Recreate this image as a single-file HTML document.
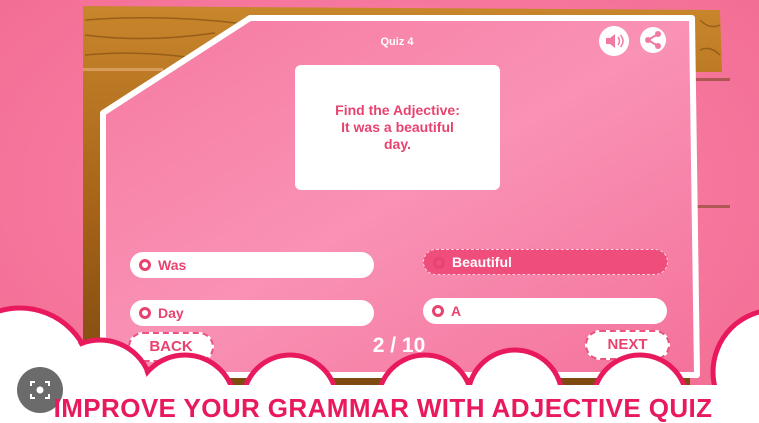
<!DOCTYPE html>
<html><head><meta charset="utf-8"><style>
html,body{margin:0;padding:0;width:759px;height:423px;overflow:hidden}
body{position:relative;background:radial-gradient(ellipse at 50% 45%,#fa9bbb 0%,#f6789e 55%,#f26b92 100%);font-family:"Liberation Sans",sans-serif}
svg{overflow:hidden}
.abs{position:absolute}
.opt{position:absolute;height:26px;border-radius:14px;background:#fff;color:#e8436f;font-weight:bold;font-size:14px;line-height:26px;box-sizing:border-box;padding-left:28px}
.opt:before{content:"";position:absolute;left:9px;top:7px;width:6px;height:6px;border:3px solid #e8436f;border-radius:50%}
.btn{position:absolute;border:2px dashed #e9557f;border-radius:16px;background:#fff;color:#e8436f;font-weight:bold;font-size:15px;text-align:center;box-sizing:border-box}
</style></head><body>
<svg class="abs" style="left:0;top:0" width="759" height="423">
<defs><linearGradient id="w" x1="0" y1="0" x2="0" y2="1"><stop offset="0" stop-color="#c8862c"/><stop offset=".5" stop-color="#a86418"/><stop offset="1" stop-color="#7a4810"/></linearGradient>
<linearGradient id="p" x1="0" y1="0" x2="1" y2="1"><stop offset="0" stop-color="#f67aa0"/><stop offset=".5" stop-color="#f992b5"/><stop offset="1" stop-color="#f4729b"/></linearGradient></defs>
<polygon points="83,6 720,10 722,72 690,72 690,400 83,400" fill="url(#w)"/>
<g stroke="#7a4810" stroke-width="1.5" fill="none" opacity=".6">
<path d="M85 20q80 -6 160 4M85 35q60 8 130 -2M85 55q50 -5 110 3M700 20q10 10 20 5M700 50q10 -5 20 5"/>
</g>
<rect x="83" y="68" width="80" height="3" fill="#e8b080" opacity=".6"/>
<rect x="690" y="78" width="40" height="3" fill="#6a3a0a" opacity=".5"/>
<rect x="690" y="205" width="40" height="3" fill="#6a3a0a" opacity=".5"/>
<polygon points="250,18 692,18 697,375 103,375 103,113" fill="url(#p)" stroke="#fff" stroke-width="6" stroke-linejoin="round"/>
</svg>
<div class="abs" style="left:370px;top:36px;width:54px;text-align:center;color:#fff;font-weight:bold;font-size:11px">Quiz 4</div>
<svg class="abs" style="left:598px;top:26px" width="70" height="32">
<circle cx="16" cy="15" r="15" fill="#fff"/>
<path d="M8 12h4l5-4v14l-5-4H8z" fill="#f07aa0"/>
<path d="M20 11q3 4 0 8M22.5 9q5 6 0 12" stroke="#f07aa0" stroke-width="1.5" fill="none"/>
<circle cx="55" cy="14" r="13" fill="#fff"/>
<circle cx="60" cy="8" r="3" fill="#f07aa0"/><circle cx="50" cy="14" r="3" fill="#f07aa0"/><circle cx="60" cy="20" r="3" fill="#f07aa0"/>
<path d="M60 8L50 14L60 20" stroke="#f07aa0" stroke-width="2" fill="none"/>
</svg>
<div class="abs" style="left:295px;top:65px;width:205px;height:125px;background:#fff;border-radius:6px;color:#e8436f;font-weight:bold;font-size:14px;line-height:17px;text-align:center;box-sizing:border-box;padding-top:37px">Find the Adjective:<br>It was a beautiful<br>day.</div>
<div class="opt" style="left:130px;top:252px;width:244px">Was</div>
<div class="opt" style="left:130px;top:300px;width:244px">Day</div>
<div class="opt" style="left:423px;top:298px;width:244px">A</div>
<div class="opt" style="left:423px;top:249px;width:245px;background:#ef4d7c;color:#fff;border:1px dashed #fbd0dc;line-height:24px">Beautiful</div>
<div class="btn" style="left:128px;top:332px;width:86px;height:30px;line-height:26px">BACK</div>
<div class="btn" style="left:585px;top:330px;width:85px;height:30px;line-height:26px">NEXT</div>
<div class="abs" style="left:356px;top:334px;width:86px;text-align:center;color:#fff;font-weight:bold;font-size:21px">2 / 10</div>
<svg class="abs" style="left:0;top:0" width="759" height="423">
<g fill="#fff" stroke="#e8195c" stroke-width="5">
<circle cx="20" cy="380" r="72"/><circle cx="100" cy="392" r="52"/><circle cx="185" cy="405" r="50"/><circle cx="290" cy="402" r="47"/><circle cx="425" cy="402" r="47"/><circle cx="515" cy="397" r="47"/><circle cx="640" cy="402" r="47"/><circle cx="775" cy="372" r="62"/>
</g>
<g fill="#fff">
<circle cx="20" cy="380" r="69"/><circle cx="100" cy="392" r="49"/><circle cx="185" cy="405" r="47"/><circle cx="290" cy="402" r="44"/><circle cx="425" cy="402" r="44"/><circle cx="515" cy="397" r="44"/><circle cx="640" cy="402" r="44"/><circle cx="775" cy="372" r="59"/>
<rect x="0" y="385" width="759" height="38"/>
</g>
<circle cx="40" cy="390" r="23" fill="#6b6b6b"/>
<path d="M31 386v-4h4M45 382h4v4M49 394v4h-4M35 398h-4v-4" stroke="#fff" stroke-width="2" fill="none"/>
<circle cx="40" cy="390" r="3.5" fill="#fff"/>
</svg>
<div class="abs" style="left:30px;top:394px;width:706px;height:29px;overflow:hidden;text-align:center;color:#e8195c;font-weight:bold;font-size:26px;line-height:29px;letter-spacing:0.4px;white-space:nowrap">IMPROVE YOUR GRAMMAR WITH ADJECTIVE QUIZ</div>
</body></html>
